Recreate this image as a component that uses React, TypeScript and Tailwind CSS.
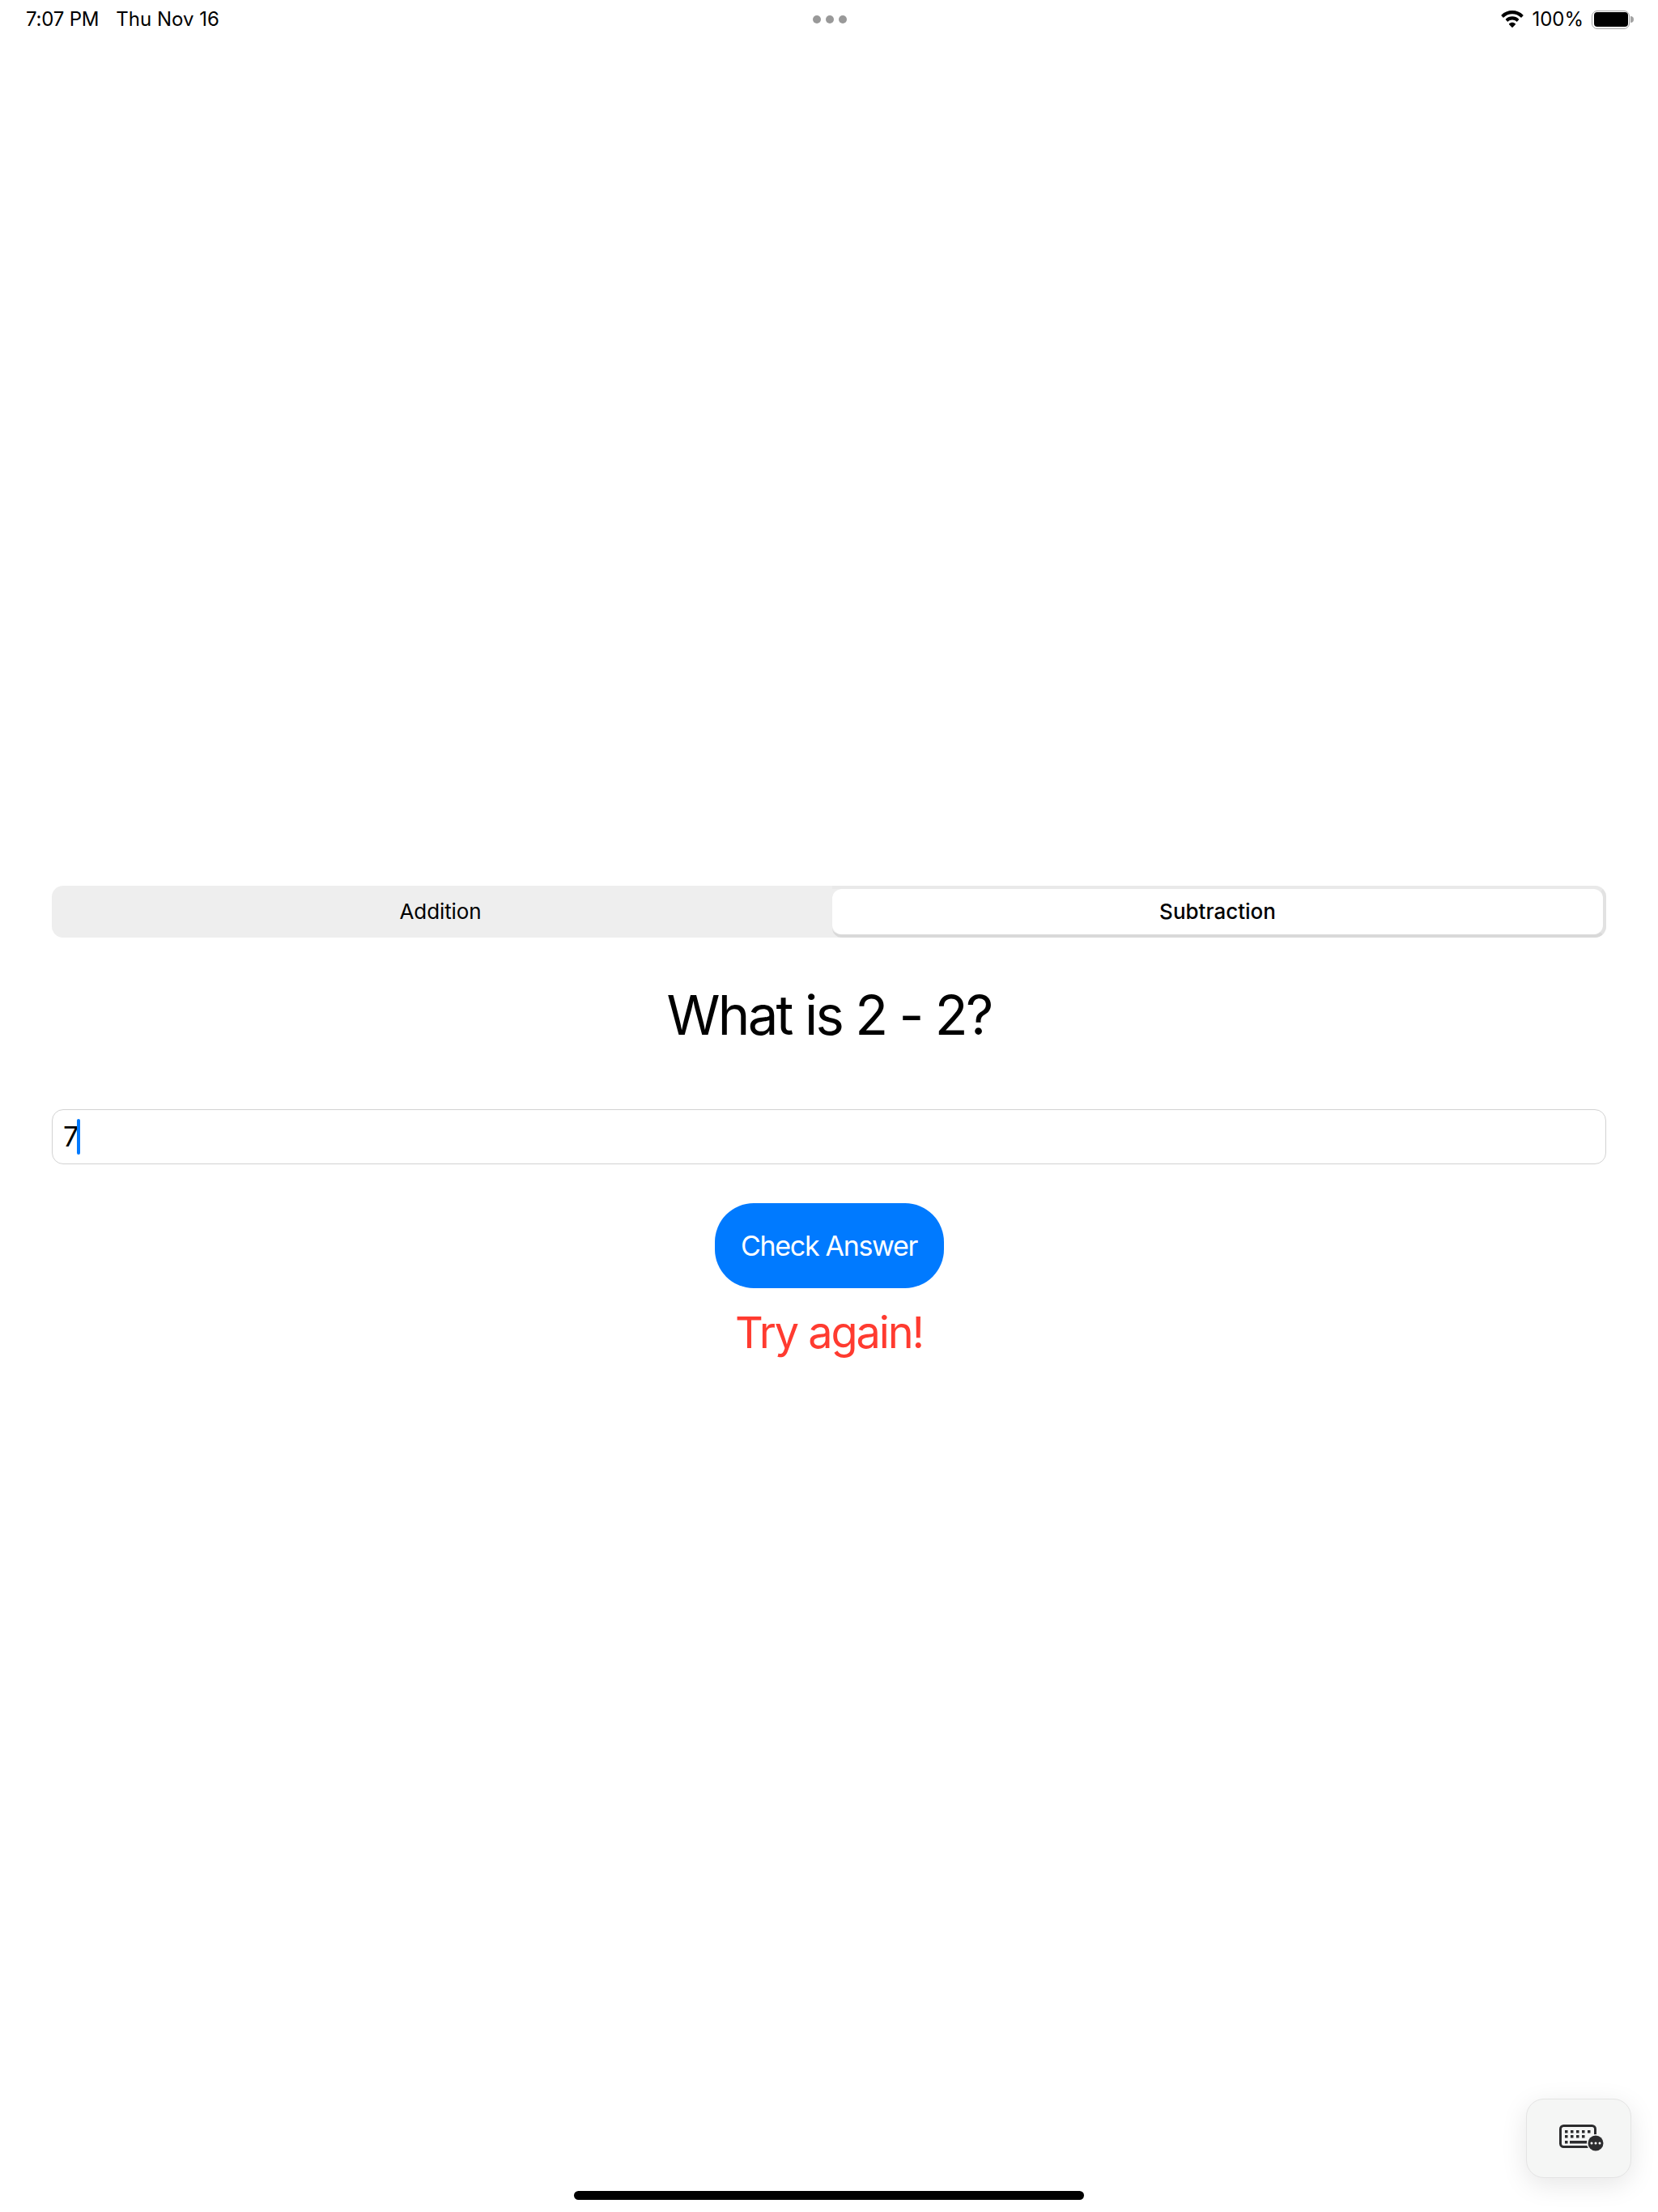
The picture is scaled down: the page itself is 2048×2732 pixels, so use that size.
export default function App() {
  const font = { fontFamily: 'Inter, "Noto Sans", sans-serif' };
  return (
    <div style={font} className="relative flex h-[2732px] w-[2048px] flex-col overflow-hidden bg-white text-black">
      <header className="grid h-12 grid-cols-3 items-center pl-[32px] pr-[30px] text-[24px] leading-none">
        <div className="flex gap-[21px]">
          <span className="tracking-[-0.2px]">7:07 PM</span>
          <span>Thu Nov 16</span>
        </div>
        <div className="flex justify-center gap-[6px]">
          <span className="h-[10px] w-[10px] rounded-full bg-[#999999]" />
          <span className="h-[10px] w-[10px] rounded-full bg-[#999999]" />
          <span className="h-[10px] w-[10px] rounded-full bg-[#999999]" />
        </div>
        <div className="flex items-center justify-end gap-[10px]">
          <svg width="28" height="22" viewBox="0 0 28 22">
            <path d="M14 0C8.8 0 4.1 2 .6 5.4c-.3.3-.3.7 0 1l1.9 2c.3.3.7.3 1 0C6.300 5.800 10 4.200 14 4.200s7.700 1.600 10.500 4.200c.3.3.7.3 1 0l1.900-2c.3-.3.3-.7 0-1C23.900 2 19.200 0 14 0z" fill="#000" />
            <path d="M14 7.300c-3.100 0-5.900 1.200-8 3.100-.3.3-.3.700 0 1l1.900 2c.3.3.7.3 1 0 1.400-1.200 3.200-1.900 5.100-1.900s3.700.7 5.100 1.900c.3.3.7.3 1 0l1.900-2c.3-.3.3-.7 0-1-2.100-1.900-4.900-3.100-8-3.100z" fill="#000" />
            <path d="M14 14.700c-1.500 0-2.900.6-3.900 1.500-.3.3-.3.7 0 1l3.400 3.500c.3.3.7.3 1 0l3.400-3.500c.3-.3.3-.7 0-1-1-.9-2.400-1.500-3.900-1.500z" fill="#000" />
          </svg>
          <span>100%</span>
          <div className="flex items-center">
            <div className="h-[23px] w-[47px] rounded-[7px] border-[1.5px] border-[#a3a3a3] p-[1.5px]">
              <div className="h-full w-full rounded-[4px] bg-black" />
            </div>
            <div className="ml-[1px] h-[8px] w-[4px] rounded-r-full bg-[#a3a3a3]" />
          </div>
        </div>
      </header>

      <main className="flex flex-col items-center px-16 pt-[1046px]">
        <div className="flex h-16 w-full rounded-[14px] bg-[#eeeeee] text-[26px] leading-none">
          <div className="flex flex-1 items-center justify-center pr-[4px] tracking-[-0.1px]">Addition</div>
          <div className="flex w-[956px] items-stretch rounded-r-[14px] rounded-bl-[12px] border-y-4 border-r-4 border-t-[#e9e9e9] border-b-[#d9d9d9] border-r-[#e2e2e2]">
            <div className="flex flex-1 items-center justify-center rounded-[12px] bg-white font-medium">
              Subtraction
            </div>
          </div>
        </div>

        <h1 className="mt-[52px] text-[67px] font-normal leading-[88px] tracking-[-2.7px]">What is 2 - 2?</h1>

        <div className="mt-[72px] flex h-[68px] w-full items-center rounded-[14px] border-[1.5px] border-[#d2d2d2] pl-[13px] text-[34px]">
          <span className="leading-none">7</span>
          <span className="-ml-[2px] h-[44px] w-[4px] rounded-full bg-[#007aff]" />
        </div>

        <button className="mt-[48px] flex h-[105px] w-[283px] items-center justify-center rounded-[48px] bg-[#007aff] text-[34px] tracking-[-1.3px] text-white">
          Check Answer
        </button>

        <p className="mt-[21px] text-[54px] leading-[68px] tracking-[-2.1px] text-[#ff3b30]">Try again!</p>
      </main>

      <div className="mt-auto mb-[15px] h-[11px] w-[630px] self-center rounded-full bg-black" />

      <div className="absolute left-[1885px] top-[2592px] flex h-[98px] w-[130px] items-center justify-center rounded-[22px] border border-[#e4e4e4] bg-[#f5f6f5] shadow-[0_8px_32px_rgba(0,0,0,0.1)]">
        <svg width="56" height="34" viewBox="0 0 56 34" className="ml-[8px]">
          <rect x="1.500" y="1.500" width="43" height="26" rx="4" fill="none" stroke="#2c2c2e" strokeWidth="3" />
          <g fill="#2c2c2e">
            <rect x="7" y="7" width="3.500" height="3.500" /><rect x="14" y="7" width="3.500" height="3.500" /><rect x="21" y="7" width="3.500" height="3.500" /><rect x="28" y="7" width="3.500" height="3.500" /><rect x="35" y="7" width="3.500" height="3.500" />
            <rect x="7" y="13" width="3.500" height="3.500" /><rect x="14" y="13" width="3.500" height="3.500" /><rect x="21" y="13" width="3.500" height="3.500" /><rect x="28" y="13" width="3.500" height="3.500" />
            <rect x="7" y="20" width="3.500" height="3.500" /><rect x="13" y="20" width="22" height="3.500" />
          </g>
          <circle cx="45" cy="23" r="11" fill="#f5f6f5" />
          <circle cx="45" cy="23" r="9.500" fill="#2c2c2e" />
          <circle cx="40" cy="23" r="1.500" fill="#fff" /><circle cx="45" cy="23" r="1.500" fill="#fff" /><circle cx="50" cy="23" r="1.500" fill="#fff" />
        </svg>
      </div>
    </div>
  );
}
